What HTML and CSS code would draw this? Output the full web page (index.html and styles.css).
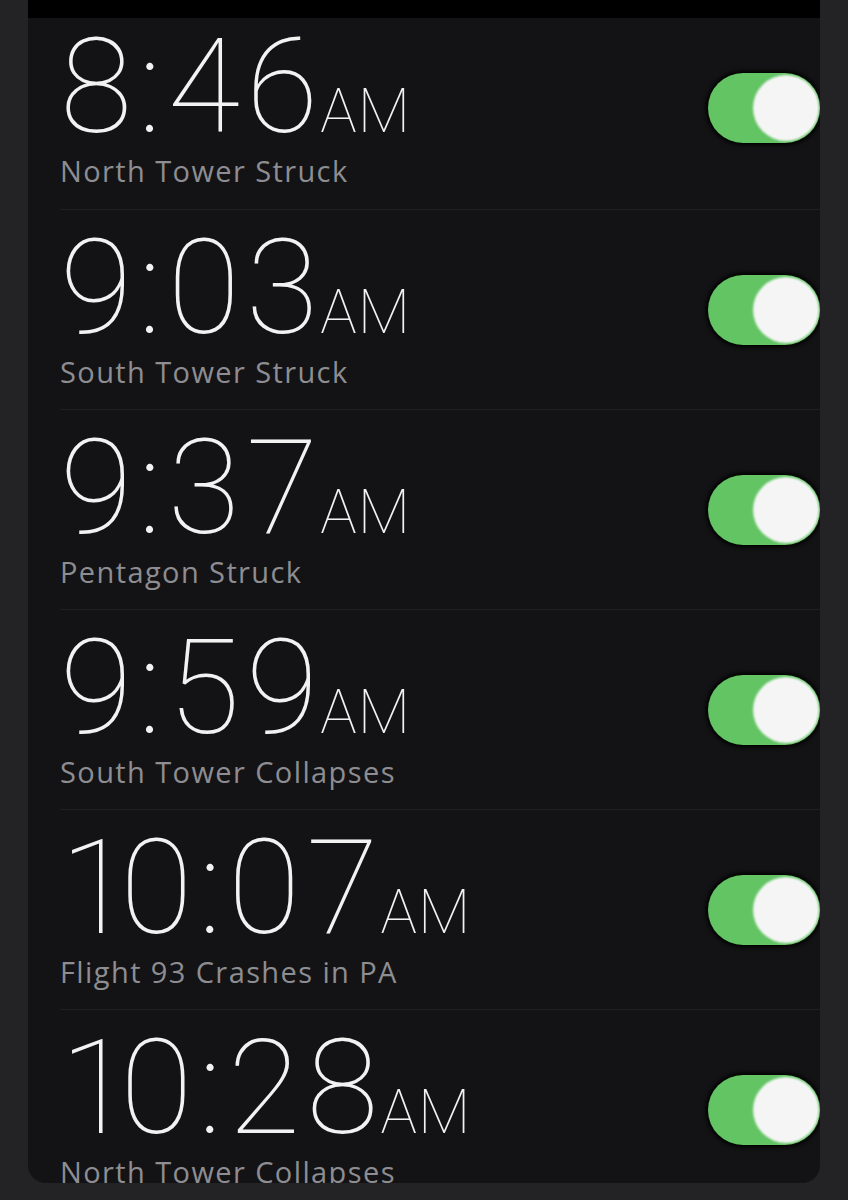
FILE: index.html
```html
<!DOCTYPE html>
<html>
<head>
  <meta charset="UTF-8">
  <title>Alarms</title>
  <link rel="stylesheet" href="styles.css">
</head>
<body>
  <div class="phone">
    <div class="topbar"></div>
    <div class="list">
      <div class="row first">
        <div class="info">
          <div class="time">8:46<span class="ampm">AM</span></div>
          <div class="label">North Tower Struck</div>
        </div>
        <div class="toggle"><div class="knob"></div></div>
      </div>
      <div class="row">
        <div class="info">
          <div class="time">9:03<span class="ampm">AM</span></div>
          <div class="label">South Tower Struck</div>
        </div>
        <div class="toggle"><div class="knob"></div></div>
      </div>
      <div class="row">
        <div class="info">
          <div class="time">9:37<span class="ampm">AM</span></div>
          <div class="label">Pentagon Struck</div>
        </div>
        <div class="toggle"><div class="knob"></div></div>
      </div>
      <div class="row">
        <div class="info">
          <div class="time">9:59<span class="ampm">AM</span></div>
          <div class="label">South Tower Collapses</div>
        </div>
        <div class="toggle"><div class="knob"></div></div>
      </div>
      <div class="row">
        <div class="info">
          <div class="time"><span class="one">1</span>0:07<span class="ampm">AM</span></div>
          <div class="label">Flight 93 Crashes in PA</div>
        </div>
        <div class="toggle"><div class="knob"></div></div>
      </div>
      <div class="row">
        <div class="info">
          <div class="time"><span class="one">1</span>0:28<span class="ampm">AM</span></div>
          <div class="label">North Tower Collapses</div>
        </div>
        <div class="toggle"><div class="knob"></div></div>
      </div>
    </div>
  </div>
</body>
</html>
```

FILE: styles.css
```css
html, body { margin: 0; padding: 0; }
body { background: #232325; font-family: Roboto, "Liberation Sans", sans-serif; }

.phone { margin: 0 28px; height: 1183px; background: #131315; border-radius: 0 0 18px 18px; overflow: hidden; }
.topbar { height: 18px; background: #000; }

.row { height: 199px; border-bottom: 1px solid #202023; margin-left: 32px; display: flex; align-items: center; justify-content: space-between; }
.row.first { height: 191px; }
.row.first .info { padding-top: 3px; }
.row.first .toggle { margin-top: -12px; }
.info { align-self: flex-start; padding-top: 12px; }

.time { font-size: 132px; font-weight: 100; line-height: 132px; color: #f2f2f2; letter-spacing: 6px; white-space: nowrap; }
.time .one { letter-spacing: -12px; }
.ampm { font-size: 61px; line-height: 1; letter-spacing: 1px; margin-left: -4px; }
.label { font-family: "Open Sans", "Liberation Sans", sans-serif; font-size: 29px; line-height: 29px; color: #8d8d92; margin-top: 3px; letter-spacing: 1.4px; }

.toggle { width: 112px; height: 70px; border-radius: 35px; background: #62c463; position: relative; box-shadow: 0 0 4px 2px #000; flex-shrink: 0; }
.knob { position: absolute; right: 1px; top: 2px; width: 66px; height: 66px; border-radius: 50%; background: #f5f5f5; filter: blur(1.2px); }
```
